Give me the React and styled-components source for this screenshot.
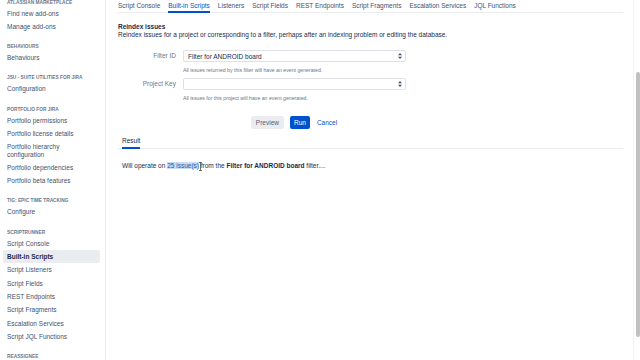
import React from "react";
import styled, { createGlobalStyle, css } from "styled-components";

const Global = createGlobalStyle`
  html, body { margin: 0; padding: 0; background: #fff; }
  body { font-family: "Liberation Sans", Arial, sans-serif; color: #172b4d; overflow: hidden; }
  * { box-sizing: border-box; }
`;

const Page = styled.div`
  display: flex;
  width: 640px;
  height: 360px;
  overflow: hidden;
`;

const Sidebar = styled.nav`
  width: 106px;
  flex: none;
  border-right: 1px solid #ebecf0;
  padding: 0 5px 0 3px;
  overflow: hidden;
`;

const SideInner = styled.div`
  margin-top: -1.5px;
`;

const Group = styled.div`
  & + & { margin-top: 10px; }
`;

const GroupTitle = styled.div`
  font-size: 4.8px;
  line-height: 7px;
  font-weight: 700;
  color: #6b778c;
  text-transform: uppercase;
  padding-left: 4px;
  margin-bottom: 1px;
  white-space: nowrap;
`;

const NavItem = styled.div`
  font-size: 6.5px;
  line-height: 7.3px;
  padding: 3px 4px;
  border-radius: 2px;
  color: #42526e;
  ${(p) =>
    p.$active &&
    css`
      background: #ebecf0;
      color: #172b4d;
      font-weight: 700;
    `}
`;

const Main = styled.main`
  flex: 1;
  padding: 0 10px 0 12px;
  min-width: 0;
`;

const Tabs = styled.div`
  display: flex;
  gap: 8px;
  border-bottom: 1px solid #ebecf0;
  height: 13px;
`;

const Tab = styled.div`
  font-size: 6.5px;
  line-height: 8px;
  padding-top: 1.5px;
  height: 13px;
  white-space: nowrap;
  color: ${(p) => (p.$active ? "#0052cc" : "#42526e")};
  border-bottom: 2px solid ${(p) => (p.$active ? "#0052cc" : "transparent")};
`;

const Title = styled.h2`
  margin: 10px 0 0;
  font-size: 6.5px;
  line-height: 8px;
  font-weight: 700;
`;

const Desc = styled.p`
  margin: 0;
  font-size: 6.5px;
  line-height: 8px;
`;

const Form = styled.div`
  display: grid;
  grid-template-columns: 58px 223px;
  column-gap: 7px;
  margin-top: 11px;
`;

const Label = styled.div`
  font-size: 6.5px;
  line-height: 12px;
  text-align: right;
  color: #6b778c;
`;

const Field = styled.div`
  display: flex;
  flex-direction: column;
`;

const Select = styled.div`
  height: 12px;
  border: 1px solid #dfe1e6;
  border-radius: 2px;
  background: #fff;
  display: flex;
  align-items: center;
  justify-content: space-between;
  padding: 0 3px 0 4px;
  font-size: 6.5px;
  color: #172b4d;
`;

const Help = styled.div`
  font-size: 5.2px;
  line-height: 7px;
  color: #6b778c;
  margin-top: 5px;
  margin-bottom: ${(p) => p.$mb || 0}px;
`;

const Actions = styled.div`
  grid-column: 2;
  display: flex;
  justify-content: center;
  align-items: center;
  gap: 6px;
  margin-top: 14px;
`;

const Button = styled.button`
  font-family: inherit;
  font-size: 6.5px;
  height: 13px;
  border: none;
  border-radius: 2px;
  padding: 0 5px;
  cursor: pointer;
  ${(p) =>
    p.$variant === "primary"
      ? css`
          background: #0052cc;
          color: #fff;
          padding: 0 4px;
        `
      : p.$variant === "link"
      ? css`
          background: none;
          color: #0052cc;
          padding: 0 1px;
        `
      : css`
          background: #ebecf0;
          color: #505f79;
        `}
`;

const ResultTabs = styled.div`
  margin-top: 8px;
  border-bottom: 1px solid #ebecf0;
  padding-left: 4px;
  display: flex;
`;

const ResultTab = styled.div`
  font-size: 6.5px;
  line-height: 8px;
  padding-bottom: 2px;
  border-bottom: 2px solid #0052cc;
  margin-bottom: -1px;
  color: #172b4d;
`;

const ResultText = styled.p`
  position: relative;
  margin: 13px 0 0 4px;
  font-size: 6.5px;
  line-height: 8px;
  color: #172b4d;
`;

const Sel = styled.span`
  background: #c8dcf5;
  color: #1f5aa8;
`;

const Cursor = styled.span`
  position: relative;
  display: inline-block;
  width: 0;
  height: 8px;
  vertical-align: top;
  & > svg {
    position: absolute;
    left: -1.5px;
    top: 0;
  }
`;

const Rail = styled.div`
  width: 7px;
  flex: none;
  border-left: 1px solid #f1f2f4;
  padding: 72px 0 0 2px;
`;

const Thumb = styled.div`
  width: 4px;
  height: 265px;
  background: #c1c1c1;
  border-radius: 2px;
`;

const Arrows = () => (
  <svg width="4" height="6" viewBox="0 0 4 6">
    <path d="M2 0 L4 2.3 L0 2.3 Z" fill="#42526e" />
    <path d="M2 6 L4 3.7 L0 3.7 Z" fill="#42526e" />
  </svg>
);

const groups = [
  { title: "Atlassian Marketplace", items: ["Find new add-ons", "Manage add-ons"] },
  { title: "Behaviours", items: ["Behaviours"] },
  { title: "JSU - Suite Utilities for Jira", items: ["Configuration"] },
  {
    title: "Portfolio for Jira",
    items: [
      "Portfolio permissions",
      "Portfolio license details",
      ["Portfolio hierarchy", "configuration"],
      "Portfolio dependencies",
      "Portfolio beta features",
    ],
  },
  { title: "Tig: Epic Time Tracking", items: ["Configure"] },
  {
    title: "ScriptRunner",
    items: [
      "Script Console",
      "Built-in Scripts",
      "Script Listeners",
      "Script Fields",
      "REST Endpoints",
      "Script Fragments",
      "Escalation Services",
      "Script JQL Functions",
    ],
  },
  { title: "Reassignee", items: [] },
];

const tabs = [
  "Script Console",
  "Built-in Scripts",
  "Listeners",
  "Script Fields",
  "REST Endpoints",
  "Script Fragments",
  "Escalation Services",
  "JQL Functions",
];

export default function App() {
  return (
    <>
      <Global />
      <Page>
        <Sidebar>
          <SideInner>
            {groups.map((g) => (
              <Group key={g.title}>
                <GroupTitle>{g.title}</GroupTitle>
                {g.items.map((it) => {
                  const key = Array.isArray(it) ? it.join(" ") : it;
                  return (
                    <NavItem key={key} $active={key === "Built-in Scripts"}>
                      {Array.isArray(it) ? (
                        <>
                          {it[0]}
                          <br />
                          {it[1]}
                        </>
                      ) : (
                        it
                      )}
                    </NavItem>
                  );
                })}
              </Group>
            ))}
          </SideInner>
        </Sidebar>
        <Main>
          <Tabs>
            {tabs.map((t) => (
              <Tab key={t} $active={t === "Built-in Scripts"}>
                {t}
              </Tab>
            ))}
          </Tabs>
          <Title>Reindex issues</Title>
          <Desc>
            Reindex issues for a project or corresponding to a filter, perhaps after an indexing problem or
            editing the database.
          </Desc>
          <Form>
            <Label>Filter ID</Label>
            <Field>
              <Select>
                <span>Filter for ANDROID board</span>
                <Arrows />
              </Select>
              <Help $mb={4}>All issues returned by this filter will have an event generated.</Help>
            </Field>
            <Label>Project Key</Label>
            <Field>
              <Select>
                <span />
                <Arrows />
              </Select>
              <Help>All issues for this project will have an event generated.</Help>
            </Field>
            <Actions>
              <Button>Preview</Button>
              <Button $variant="primary">Run</Button>
              <Button $variant="link">Cancel</Button>
            </Actions>
          </Form>
          <ResultTabs>
            <ResultTab>Result</ResultTab>
          </ResultTabs>
          <ResultText>
            Will operate on <Sel>25 issue(s)</Sel>{" "}
            <Cursor>
              <svg width="3" height="9" viewBox="0 0 3 9">
                <path d="M0 0.5 H3 M1.5 0.5 V8.5 M0 8.5 H3" stroke="#333" strokeWidth="0.7" fill="none" />
              </svg>
            </Cursor>
            from the <b>Filter for ANDROID board</b> filter....
          </ResultText>
        </Main>
        <Rail>
          <Thumb />
        </Rail>
      </Page>
    </>
  );
}
